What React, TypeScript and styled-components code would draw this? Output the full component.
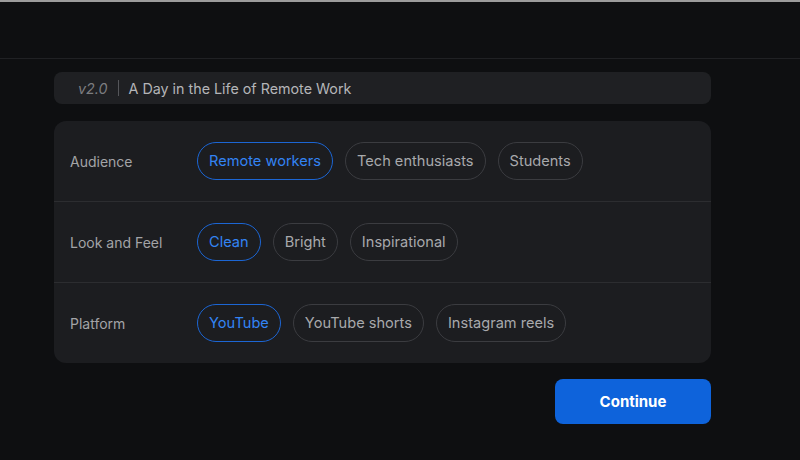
import React, { useState } from "react";
import styled, { createGlobalStyle } from "styled-components";

const GlobalStyle = createGlobalStyle`
  html, body {
    margin: 0;
    padding: 0;
    background: #0e0f11;
    font-family: Inter, "Noto Sans", sans-serif;
  }
`;

interface Group {
  label: string;
  options: string[];
}

const groups: Group[] = [
  { label: "Audience", options: ["Remote workers", "Tech enthusiasts", "Students"] },
  { label: "Look and Feel", options: ["Clean", "Bright", "Inspirational"] },
  { label: "Platform", options: ["YouTube", "YouTube shorts", "Instagram reels"] },
];

const App: React.FC = () => {
  const [picked, setPicked] = useState<string[]>(groups.map((g) => g.options[0]));

  return (
    <Page>
      <GlobalStyle />
      <TopBar />
      <Content>
        <VersionBar>
          <Version>v2.0</Version>
          <Divider />
          <Title>A Day in the Life of Remote Work</Title>
        </VersionBar>
        <Card>
          {groups.map((g, i) => (
            <Row key={g.label}>
              <Label>{g.label}</Label>
              <Chips>
                {g.options.map((o) => (
                  <Chip
                    key={o}
                    $active={picked[i] === o}
                    onClick={() => {
                      const next = [...picked];
                      next[i] = o;
                      setPicked(next);
                    }}
                  >
                    {o}
                  </Chip>
                ))}
              </Chips>
            </Row>
          ))}
        </Card>
        <Footer>
          <ContinueButton>Continue</ContinueButton>
        </Footer>
      </Content>
    </Page>
  );
};

const Page = styled.div`
  min-height: 460px;
  border-top: 2px solid #9c9c9c;
  box-sizing: border-box;
`;

const TopBar = styled.div`
  height: 56px;
  border-bottom: 1px solid #202124;
`;

const Content = styled.div`
  width: 657px;
  margin-left: 54px;
  padding-top: 13px;
  display: flex;
  flex-direction: column;
`;

const VersionBar = styled.div`
  height: 32px;
  background: #1f2023;
  border-radius: 8px;
  display: flex;
  align-items: center;
  padding-left: 24px;
  font-size: 14.3px;
`;

const Version = styled.span`
  color: #7c7d80;
  font-style: italic;
`;

const Divider = styled.span`
  width: 1px;
  height: 16px;
  background: #55565a;
  margin: 0 10px;
`;

const Title = styled.span`
  color: #b4b5b8;
`;

const Card = styled.div`
  margin-top: 17px;
  background: #1c1d20;
  border-radius: 12px;
  overflow: hidden;
`;

const Row = styled.div`
  height: 80px;
  display: flex;
  align-items: center;
  padding-left: 16px;
  & + & {
    border-top: 1px solid #2c2d30;
  }
`;

const Label = styled.div`
  width: 127px;
  color: #a3a4a7;
  font-size: 14px;
`;

const Chips = styled.div`
  display: flex;
  gap: 12px;
`;

const Chip = styled.button<{ $active: boolean }>`
  height: 38px;
  padding: 0 11px;
  border-radius: 19px;
  background: transparent;
  border: 1px solid ${(p) => (p.$active ? "#1c66d4" : "#3b3c40")};
  color: ${(p) => (p.$active ? "#3384f4" : "#a8a9ac")};
  font-family: Inter, "Noto Sans", sans-serif;
  font-size: 14.6px;
  cursor: pointer;
`;

const Footer = styled.div`
  display: flex;
  justify-content: flex-end;
  margin-top: 16px;
`;

const ContinueButton = styled.button`
  width: 156px;
  height: 45px;
  border: none;
  border-radius: 8px;
  background: #0e63db;
  color: #ffffff;
  font-family: Inter, "Noto Sans", sans-serif;
  font-size: 15px;
  font-weight: 700;
  cursor: pointer;
`;

export default App;
